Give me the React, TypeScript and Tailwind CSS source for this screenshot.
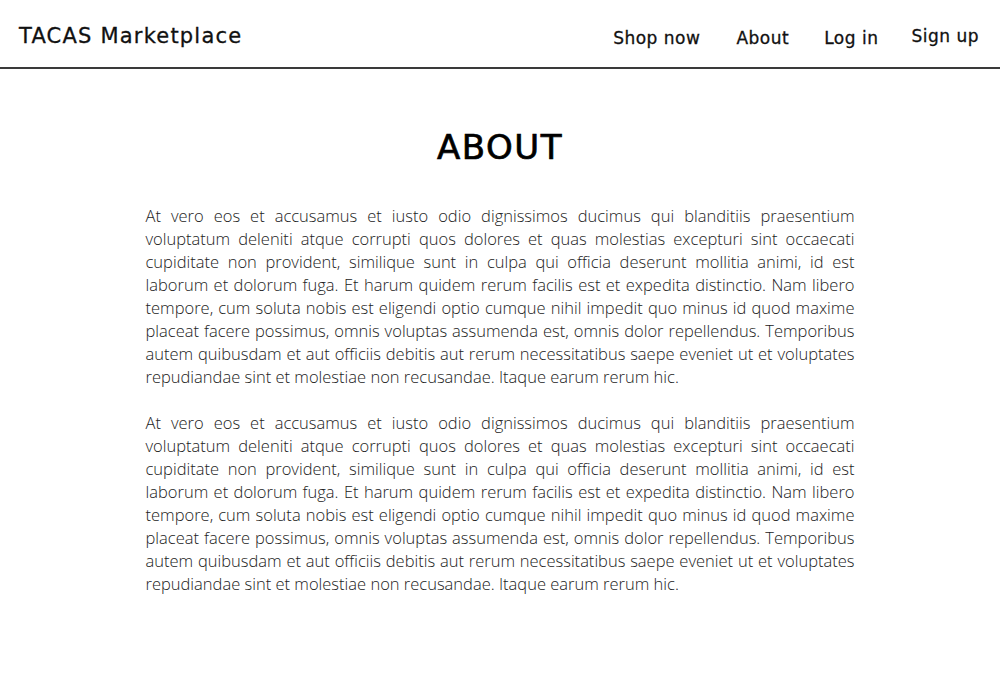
import React from "react";

const para =
  "At vero eos et accusamus et iusto odio dignissimos ducimus qui blanditiis praesentium voluptatum deleniti atque corrupti quos dolores et quas molestias excepturi sint occaecati cupiditate non provident, similique sunt in culpa qui officia deserunt mollitia animi, id est laborum et dolorum fuga. Et harum quidem rerum facilis est et expedita distinctio. Nam libero tempore, cum soluta nobis est eligendi optio cumque nihil impedit quo minus id quod maxime placeat facere possimus, omnis voluptas assumenda est, omnis dolor repellendus. Temporibus autem quibusdam et aut officiis debitis aut rerum necessitatibus saepe eveniet ut et voluptates repudiandae sint et molestiae non recusandae. Itaque earum rerum hic.";

export default function App() {
  return (
    <div className="min-h-[686px] bg-white text-black">
      <header className="flex h-[69px] items-start justify-between border-b-2 border-[#3a3a3a] pl-[19px] pr-[21px]">
        <div className="pt-[22px] text-[21px] leading-[28px] tracking-[1.2px] text-[#111] [font-family:'DejaVu_Sans',sans-serif] [-webkit-text-stroke:0.3px_#111]">
          TACAS Marketplace
        </div>
        <nav className="flex items-start text-[17px] tracking-[0.5px] text-[#111] [font-family:'DejaVu_Sans',sans-serif] [-webkit-text-stroke:0.3px_#111]">
          <span className="ml-[1px] pt-[26px] leading-[24px]">Shop now</span>
          <span className="ml-[36px] pt-[26px] leading-[24px]">About</span>
          <span className="ml-[35px] pt-[26px] leading-[24px]">Log in</span>
          <span className="ml-[33px] pt-[24px] leading-[24px]">Sign up</span>
        </nav>
      </header>
      <main className="flex flex-col items-center">
        <h1 className="mt-[58px] text-[34px] leading-[40px] text-black [font-family:'DejaVu_Sans',sans-serif] font-normal tracking-[1.5px] [-webkit-text-stroke:0.7px_black]">
          ABOUT
        </h1>
        <div className="mt-[37px] w-[709px] text-justify text-[16.5px] leading-[23px] font-light text-[#222] [font-family:'Open_Sans',sans-serif]">
          <p className="mb-[23px]">{para}</p>
          <p>{para}</p>
        </div>
      </main>
    </div>
  );
}
